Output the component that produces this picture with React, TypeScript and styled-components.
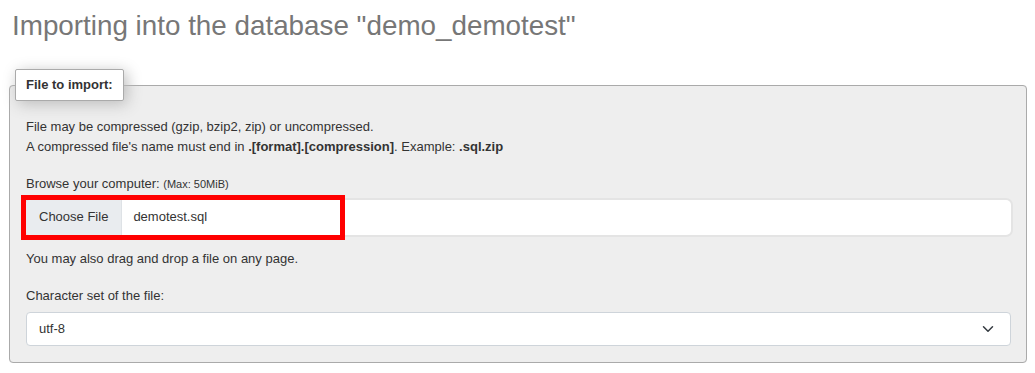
import React from "react";
import styled, { createGlobalStyle } from "styled-components";

const GlobalStyle = createGlobalStyle`
  html, body {
    margin: 0;
    padding: 0;
    background: #fff;
  }
  body {
    font-family: "Liberation Sans", Arial, sans-serif;
    font-size: 13px;
    line-height: 1.5;
    color: #333;
    overflow: hidden;
  }
`;

const Page = styled.div`
  padding: 0 8px 0 9px;
`;

const Heading = styled.h2`
  margin: 9px 0 27px 3px;
  font-size: 27.8px;
  font-weight: normal;
  line-height: 33px;
  color: #777;
`;

const Fieldset = styled.fieldset`
  margin: 0;
  padding: 16px 15px 16px 16px;
  background: #eee;
  border: 1px solid #aaa;
  border-radius: 4px;
`;

const Legend = styled.legend`
  margin-left: -11px;
  padding: 5px 10px;
  background: #fff;
  border: 1px solid #aaa;
  border-radius: 2px;
  box-shadow: 3px 3px 15px #bbb;
  font-weight: bold;
  font-size: 13px;
  line-height: 20px;
  color: #333;
`;

const Text = styled.p<{ $gap?: number }>`
  margin: 0 0 ${(p) => p.$gap ?? 0}px;
`;

const Label = styled.label`
  display: block;
  margin-bottom: 6px;
`;

const Small = styled.small`
  font-size: 11px;
`;

const FileField = styled.div`
  position: relative;
  display: flex;
  height: 35px;
  background: #fff;
  border-radius: 5px;
  box-shadow: 0 0 0 2px #e4e4e4;
`;

const ChooseButton = styled.span`
  display: flex;
  align-items: center;
  padding: 0 13px;
  background: #e9ecef;
  border-right: 1px solid #dee2e6;
  border-radius: 5px 0 0 5px;
  color: #333;
`;

const FileName = styled.span`
  display: flex;
  align-items: center;
  padding: 0 11px;
  color: #333;
`;

const Highlight = styled.div`
  position: absolute;
  left: -5px;
  top: -5px;
  width: 314px;
  height: 35px;
  border: 5px solid #f00;
  pointer-events: none;
`;

const Hint = styled.div`
  margin: 14px 0 18px;
`;

const Select = styled.div`
  display: flex;
  align-items: center;
  justify-content: space-between;
  height: 32px;
  padding: 0 14px 0 12px;
  background: #fff;
  border: 1px solid #ced4da;
  border-radius: 4px;
  color: #333;
`;

const Chevron = () => (
  <svg width="16" height="12" viewBox="0 0 16 16" fill="none">
    <path d="m2 5 6 6 6-6" stroke="#343a40" strokeWidth="2" strokeLinecap="round" strokeLinejoin="round" />
  </svg>
);

export default function App() {
  return (
    <Page>
      <GlobalStyle />
      <Heading>Importing into the database "demo_demotest"</Heading>
      <Fieldset>
        <Legend>File to import:</Legend>
        <Text>File may be compressed (gzip, bzip2, zip) or uncompressed.</Text>
        <Text $gap={18}>
          A compressed file's name must end in <b>.[format].[compression]</b>. Example: <b>.sql.zip</b>
        </Text>
        <Label>
          Browse your computer: <Small>(Max: 50MiB)</Small>
        </Label>
        <FileField>
          <ChooseButton>Choose File</ChooseButton>
          <FileName>demotest.sql</FileName>
          <Highlight />
        </FileField>
        <Hint>You may also drag and drop a file on any page.</Hint>
        <Label>Character set of the file:</Label>
        <Select>
          <span>utf-8</span>
          <Chevron />
        </Select>
      </Fieldset>
    </Page>
  );
}
